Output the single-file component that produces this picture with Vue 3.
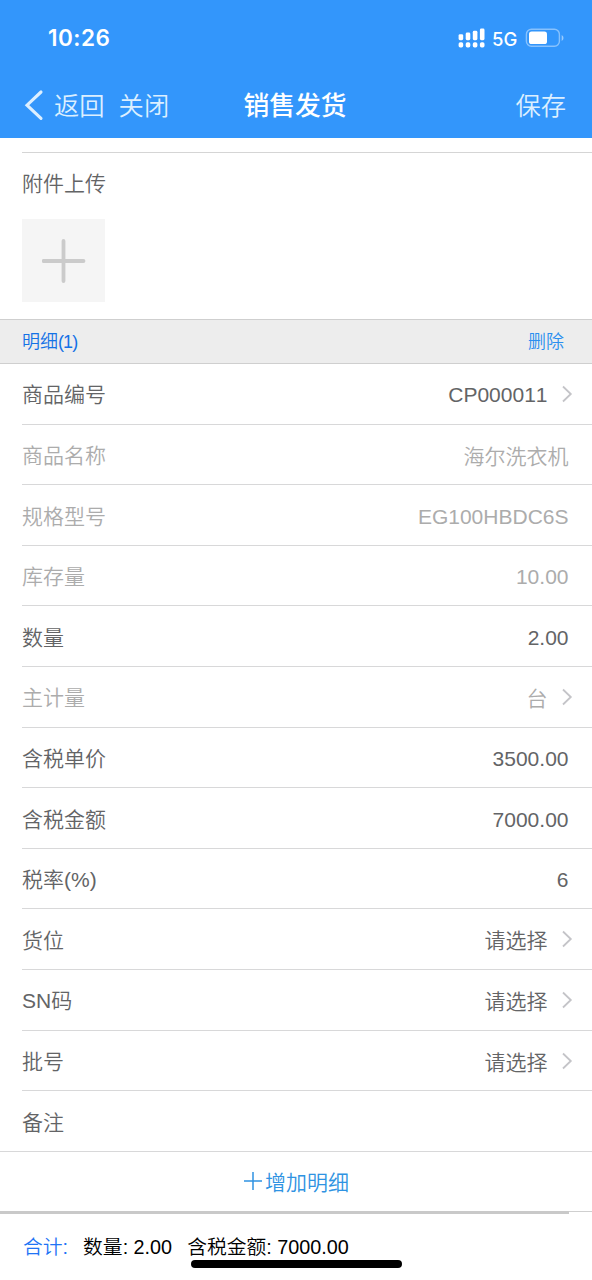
<script setup>
const rows = [
  { label: '商品编号', value: 'CP000011', arrow: true, latin: true },
  { label: '商品名称', value: '海尔洗衣机', muted: true },
  { label: '规格型号', value: 'EG100HBDC6S', muted: true, latin: true },
  { label: '库存量', value: '10.00', muted: true, latin: true },
  { label: '数量', value: '2.00', latin: true },
  { label: '主计量', value: '台', muted: true, arrow: true },
  { label: '含税单价', value: '3500.00', latin: true },
  { label: '含税金额', value: '7000.00', latin: true },
  { label: '税率(%)', value: '6', latin: true },
  { label: '货位', value: '请选择', arrow: true },
  { label: 'SN码', value: '请选择', arrow: true },
  { label: '批号', value: '请选择', arrow: true },
  { label: '备注', value: '' },
]
</script>

<template>
  <div class="screen">
    <header class="top">
      <div class="status">
        <span class="time">10:26</span>
        <div class="signals">
          <svg class="cell" width="27" height="20" viewBox="0 0 27 20" fill="#fff">
            <rect x="0.6" y="6.2" width="4.6" height="6" rx="1.4" />
            <rect x="7.7" y="4.6" width="4.6" height="7.6" rx="1.4" />
            <rect x="14.8" y="2.8" width="4.6" height="9.4" rx="1.4" />
            <rect x="21.9" y="0.6" width="4.6" height="11.6" rx="1.4" />
            <rect x="0.6" y="14.2" width="4.6" height="5.2" rx="1.7" />
            <rect x="7.7" y="14.2" width="4.6" height="5.2" rx="1.7" />
            <rect x="14.8" y="14.2" width="4.6" height="5.2" rx="1.7" />
            <rect x="21.9" y="14.2" width="4.6" height="5.2" rx="1.7" />
          </svg>
          <span class="net">5G</span>
          <svg width="39" height="20" viewBox="0 0 39 20">
            <rect x="1.4" y="1.2" width="33" height="17" rx="5" fill="none" stroke="#fff" stroke-opacity=".42" stroke-width="1.4" />
            <rect x="4" y="3.6" width="18" height="12.4" rx="2.6" fill="#fff" />
            <path d="M36.7 7v6q1.8-1 1.8-3T36.7 7z" fill="#fff" fill-opacity=".5" />
          </svg>
        </div>
      </div>
      <nav class="nav">
        <div class="side">
          <svg width="20" height="32" viewBox="0 0 20 32"><path d="M17 3 3 16.2 17 29.4" fill="none" stroke="#dcefff" stroke-width="3.1" stroke-linecap="round" stroke-linejoin="miter" /></svg>
          <span class="back">返回</span>
          <span class="close">关闭</span>
        </div>
        <h1>销售发货</h1>
        <div class="side end">保存</div>
      </nav>
    </header>

    <section class="attach">
      <div class="attach-title">附件上传</div>
      <div class="upload">
        <svg width="44" height="44" viewBox="0 0 44 44"><path d="M21.5 2v40M1.5 22h40" stroke="#cbcbcb" stroke-width="3.8" stroke-linecap="round" /></svg>
      </div>
    </section>

    <div class="detail-head">
      <span>明细<span class="count">(1)</span></span>
      <span class="remove">删除</span>
    </div>

    <div class="rows">
      <div v-for="row in rows" :key="row.label" class="row" :class="{ muted: row.muted }">
        <span class="label">{{ row.label }}</span>
        <span class="value" :class="{ linked: row.arrow, latin: row.latin }">{{ row.value }}</span>
        <svg v-if="row.arrow" class="arrow" width="12" height="18" viewBox="0 0 12 18"><path d="M2 1.5 9.8 9 2 16.5" fill="none" stroke="#c4c4c8" stroke-width="1.8" /></svg>
      </div>
    </div>

    <div class="add">
      <svg width="20" height="20" viewBox="0 0 20 20"><path d="M10 1v18M1 10h18" stroke="#2f93e2" stroke-width="1.5" /></svg>
      <span>增加明细</span>
    </div>
    <div class="divider"><div class="shade"></div></div>

    <footer class="total">
      <span class="sum">合计:</span>
      <span class="qty">数量: 2.00</span>
      <span>含税金额: 7000.00</span>
      <div class="home"></div>
    </footer>
  </div>
</template>

<style>
body {
  margin: 0;
  background: #fff;
}
</style>

<style scoped>
.screen {
  width: 592px;
  height: 1280px;
  overflow: hidden;
  box-sizing: border-box;
  display: flex;
  flex-direction: column;
  background: #fff;
  font-family: "Liberation Sans", "Noto Sans CJK SC", sans-serif;
  font-weight: 350;
  font-size: 21px;
  font-kerning: none;
  color: #636466;
  white-space: nowrap;
}
.top {
  height: 138px;
  flex: none;
  background: #3396fb;
  color: #fff;
}
.status {
  height: 76px;
  display: flex;
  justify-content: space-between;
  align-items: center;
  padding: 0 28px 0 48px;
  box-sizing: border-box;
}
.time {
  font: 600 22.5px/26px Inter, sans-serif;
  letter-spacing: 0.5px;
}
.signals {
  display: flex;
  align-items: center;
}
.net {
  font: 500 18.5px/22px Inter, sans-serif;
  width: 25px;
  margin: 1px 8px 0 7px;
}
.nav {
  height: 58px;
  display: grid;
  grid-template-columns: 1fr auto 1fr;
  align-items: center;
  padding: 0 26px 0 24px;
  font-size: 25.3px;
  color: #dcefff;
}
.side {
  display: flex;
  align-items: center;
}
.back {
  margin: 0 14px 0 10px;
}
.back,
.close,
.end,
h1 {
  padding-bottom: 3px;
}
.end {
  justify-content: flex-end;
}
h1 {
  margin: 0;
  font-size: 25.8px;
  font-weight: 500;
  color: #fff;
}
.attach {
  height: 166px;
  flex: none;
  margin: 14px 0 0 22px;
  border-top: 1px solid #d5d5d5;
}
.attach-title {
  height: 66px;
  line-height: 61px;
}
.upload {
  width: 83px;
  height: 83px;
  background: #f5f5f5;
  display: flex;
  align-items: center;
  justify-content: center;
}
.detail-head {
  height: 45px;
  flex: none;
  box-sizing: border-box;
  border-top: 1px solid #cfcfcf;
  border-bottom: 1px solid #cfcfcf;
  background: #ededed;
  display: flex;
  align-items: center;
  justify-content: space-between;
  padding: 0 28px 3px 22px;
  font-size: 18px;
  color: #1472e6;
}
.count {
  letter-spacing: -0.9px;
}
.remove {
  color: #2a8ff0;
}
.rows {
  flex: none;
}
.row {
  height: 60.62px;
  box-sizing: border-box;
  margin-left: 22px;
  padding-right: 19px;
  border-bottom: 1px solid #d8d8d9;
  display: flex;
  align-items: center;
}
.row:last-child {
  margin-left: 0;
  padding-left: 22px;
}
.muted {
  color: #acacac;
}
.label {
  flex: 1;
  padding-bottom: 1px;
}
.value {
  margin-right: 4.5px;
  padding-top: 1px;
}
.latin {
  padding-top: 3px;
}
.linked {
  margin-right: 13.5px;
  padding-top: 0;
}
.linked.latin {
  padding-top: 2px;
}
.add {
  height: 59px;
  flex: none;
  display: flex;
  align-items: center;
  justify-content: center;
  gap: 2px;
  box-sizing: border-box;
  color: #2f93e2;
}
.divider {
  height: 3px;
  flex: none;
  background: linear-gradient(#cfcfcf 1px, #fff 1px);
}
.shade {
  width: 569px;
  height: 3px;
  background: #c9c9c9;
}
.total {
  position: relative;
  flex: 1;
  display: flex;
  align-items: flex-start;
  padding: 18px 0 0 23px;
  font-size: 19.8px;
  line-height: 30px;
  color: #000;
}
.sum {
  color: #1f74f5;
  margin-right: 15px;
}
.qty {
  margin-right: 15px;
}
.home {
  position: absolute;
  left: 191px;
  bottom: 12px;
  width: 211px;
  height: 8px;
  border-radius: 4px;
  background: #000;
}
</style>
